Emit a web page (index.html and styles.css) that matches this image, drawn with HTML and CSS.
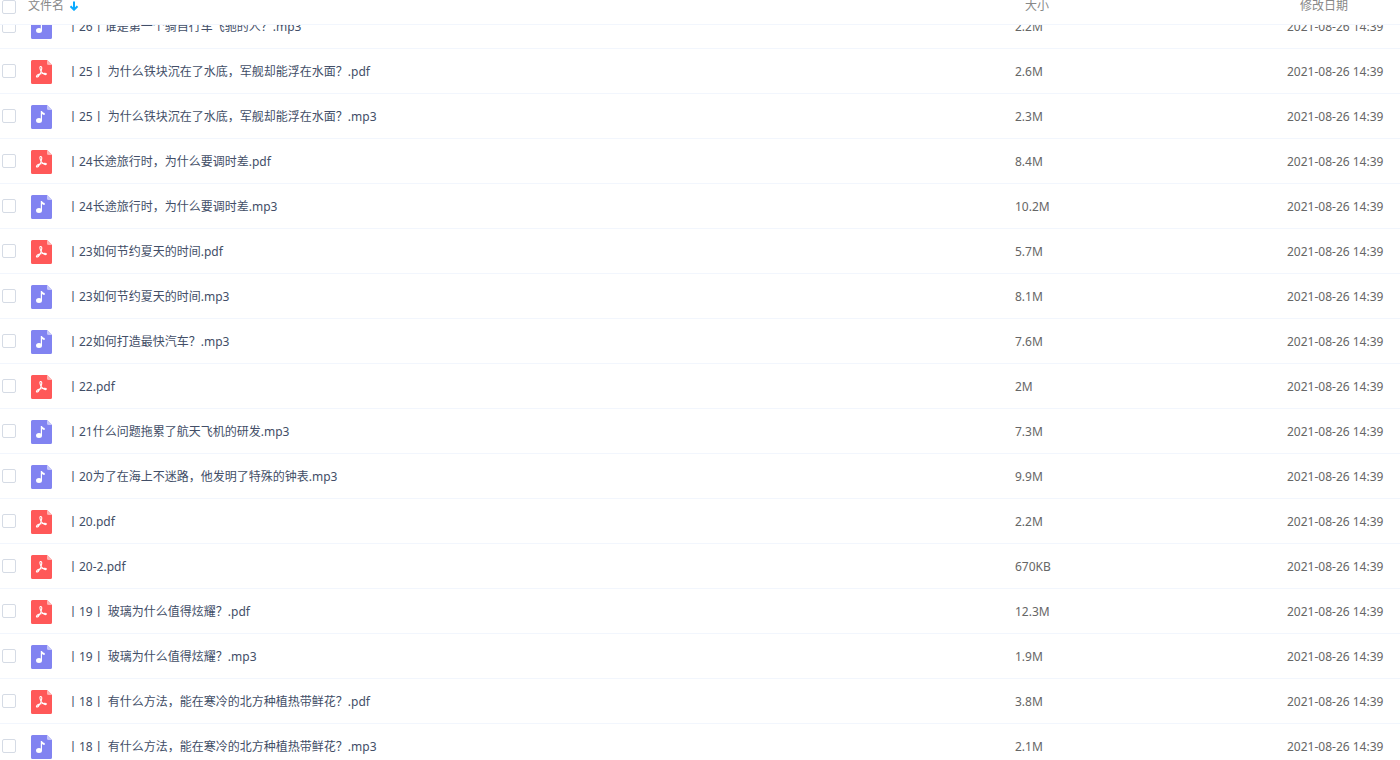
FILE: index.html
```
<!DOCTYPE html>
<html lang="zh-CN">
<head>
<meta charset="utf-8">
<title>文件列表</title>
<link rel="stylesheet" href="styles.css">
</head>
<body>
<svg class="sprite" aria-hidden="true">
  <symbol id="pdf" viewBox="0 0 21 24">
    <path fill="#ff5858" d="M1.500 0H16l5 5v17.500a1.500 1.500 0 0 1-1.500 1.500h-18A1.500 1.500 0 0 1 0 22.500v-21A1.500 1.500 0 0 1 1.500 0z"/>
    <path fill="#ffb3b3" d="M16 0l5 5h-3.500A1.500 1.500 0 0 1 16 3.500z"/>
    <path fill="none" stroke="#fff" stroke-width="1.100" stroke-linecap="round" stroke-linejoin="round" d="M9.300 6.500c1.400-.4 1.600 1.200 1.400 2.500-.3 2.600-1.600 5.600-3.500 7.500-.9.900-2 .6-1.700-.4.500-1.500 4.700-2.800 8-2.900 2.400-.1 2.300 1.500.8 1.400-1.500-.1-3.200-1.600-4.100-3.100-.9-1.600-1.900-4.600-.9-5z"/>
  </symbol>
  <symbol id="mp3" viewBox="0 0 21 24">
    <path fill="#8183f1" d="M1.500 0H16l5 5v17.500a1.500 1.500 0 0 1-1.500 1.500h-18A1.500 1.500 0 0 1 0 22.500v-21A1.500 1.500 0 0 1 1.500 0z"/>
    <path fill="#c6c7fa" d="M16 0l5 5h-3.500A1.500 1.500 0 0 1 16 3.500z"/>
    <ellipse cx="8" cy="15.500" rx="3" ry="2.500" fill="#fff"/>
    <path fill="#fff" d="M9.800 6h1.200c.3 1.200 1.300 1.800 2.700 1.900v2c-1.100 0-2-.3-2.700-.9v6.500H9.800z"/>
  </symbol>
</svg>
<table class="files">
  <thead class="head">
    <tr class="row head-row">
      <th class="name"><input class="check" type="checkbox" aria-label="全选"><button class="sort" type="button">文件名<svg class="arrow" viewBox="0 0 10 10" aria-hidden="true"><path d="M5 .5v8M1.500 5.200L5 8.700l3.500-3.500" fill="none" stroke="#09aaff" stroke-width="2"/></svg></button></th>
      <th class="size">大小</th>
      <th class="date">修改日期</th>
    </tr>
  </thead>
  <tbody class="body">
    <tr class="row"><td class="name"><input class="check" type="checkbox" id="f1"><svg class="icon" aria-hidden="true"><use href="#mp3"/></svg><label for="f1">丨26丨谁是第一个骑自行车飞驰的人？.mp3</label></td><td class="size">2.2M</td><td class="date">2021-08-26 14:39</td></tr>
    <tr class="row"><td class="name"><input class="check" type="checkbox" id="f2"><svg class="icon" aria-hidden="true"><use href="#pdf"/></svg><label for="f2">丨25丨 为什么铁块沉在了水底，军舰却能浮在水面？.pdf</label></td><td class="size">2.6M</td><td class="date">2021-08-26 14:39</td></tr>
    <tr class="row"><td class="name"><input class="check" type="checkbox" id="f3"><svg class="icon" aria-hidden="true"><use href="#mp3"/></svg><label for="f3">丨25丨 为什么铁块沉在了水底，军舰却能浮在水面？.mp3</label></td><td class="size">2.3M</td><td class="date">2021-08-26 14:39</td></tr>
    <tr class="row"><td class="name"><input class="check" type="checkbox" id="f4"><svg class="icon" aria-hidden="true"><use href="#pdf"/></svg><label for="f4">丨24长途旅行时，为什么要调时差.pdf</label></td><td class="size">8.4M</td><td class="date">2021-08-26 14:39</td></tr>
    <tr class="row"><td class="name"><input class="check" type="checkbox" id="f5"><svg class="icon" aria-hidden="true"><use href="#mp3"/></svg><label for="f5">丨24长途旅行时，为什么要调时差.mp3</label></td><td class="size">10.2M</td><td class="date">2021-08-26 14:39</td></tr>
    <tr class="row"><td class="name"><input class="check" type="checkbox" id="f6"><svg class="icon" aria-hidden="true"><use href="#pdf"/></svg><label for="f6">丨23如何节约夏天的时间.pdf</label></td><td class="size">5.7M</td><td class="date">2021-08-26 14:39</td></tr>
    <tr class="row"><td class="name"><input class="check" type="checkbox" id="f7"><svg class="icon" aria-hidden="true"><use href="#mp3"/></svg><label for="f7">丨23如何节约夏天的时间.mp3</label></td><td class="size">8.1M</td><td class="date">2021-08-26 14:39</td></tr>
    <tr class="row"><td class="name"><input class="check" type="checkbox" id="f8"><svg class="icon" aria-hidden="true"><use href="#mp3"/></svg><label for="f8">丨22如何打造最快汽车？.mp3</label></td><td class="size">7.6M</td><td class="date">2021-08-26 14:39</td></tr>
    <tr class="row"><td class="name"><input class="check" type="checkbox" id="f9"><svg class="icon" aria-hidden="true"><use href="#pdf"/></svg><label for="f9">丨22.pdf</label></td><td class="size">2M</td><td class="date">2021-08-26 14:39</td></tr>
    <tr class="row"><td class="name"><input class="check" type="checkbox" id="f10"><svg class="icon" aria-hidden="true"><use href="#mp3"/></svg><label for="f10">丨21什么问题拖累了航天飞机的研发.mp3</label></td><td class="size">7.3M</td><td class="date">2021-08-26 14:39</td></tr>
    <tr class="row"><td class="name"><input class="check" type="checkbox" id="f11"><svg class="icon" aria-hidden="true"><use href="#mp3"/></svg><label for="f11">丨20为了在海上不迷路，他发明了特殊的钟表.mp3</label></td><td class="size">9.9M</td><td class="date">2021-08-26 14:39</td></tr>
    <tr class="row"><td class="name"><input class="check" type="checkbox" id="f12"><svg class="icon" aria-hidden="true"><use href="#pdf"/></svg><label for="f12">丨20.pdf</label></td><td class="size">2.2M</td><td class="date">2021-08-26 14:39</td></tr>
    <tr class="row"><td class="name"><input class="check" type="checkbox" id="f13"><svg class="icon" aria-hidden="true"><use href="#pdf"/></svg><label for="f13">丨20-2.pdf</label></td><td class="size">670KB</td><td class="date">2021-08-26 14:39</td></tr>
    <tr class="row"><td class="name"><input class="check" type="checkbox" id="f14"><svg class="icon" aria-hidden="true"><use href="#pdf"/></svg><label for="f14">丨19丨 玻璃为什么值得炫耀？.pdf</label></td><td class="size">12.3M</td><td class="date">2021-08-26 14:39</td></tr>
    <tr class="row"><td class="name"><input class="check" type="checkbox" id="f15"><svg class="icon" aria-hidden="true"><use href="#mp3"/></svg><label for="f15">丨19丨 玻璃为什么值得炫耀？.mp3</label></td><td class="size">1.9M</td><td class="date">2021-08-26 14:39</td></tr>
    <tr class="row"><td class="name"><input class="check" type="checkbox" id="f16"><svg class="icon" aria-hidden="true"><use href="#pdf"/></svg><label for="f16">丨18丨 有什么方法，能在寒冷的北方种植热带鲜花？.pdf</label></td><td class="size">3.8M</td><td class="date">2021-08-26 14:39</td></tr>
    <tr class="row"><td class="name"><input class="check" type="checkbox" id="f17"><svg class="icon" aria-hidden="true"><use href="#mp3"/></svg><label for="f17">丨18丨 有什么方法，能在寒冷的北方种植热带鲜花？.mp3</label></td><td class="size">2.1M</td><td class="date">2021-08-26 14:39</td></tr>
  </tbody>
</table>
</body>
</html>
```

FILE: styles.css
```
* {
  box-sizing: border-box;
}

body {
  margin: 0;
  background: #fff;
  color: #666;
  font: 12px/16px "Noto Sans", "Noto Sans CJK SC", sans-serif;
}

.sprite {
  display: none;
}

.files {
  display: flex;
  flex-direction: column;
  height: 100vh;
  overflow: hidden;
}

.head,
.body {
  display: block;
}

.head {
  flex: none;
}

.body {
  flex: 1;
  min-height: 0;
  overflow: hidden;
}

.row {
  display: grid;
  grid-template-columns: 1015fr 272fr 113fr;
  align-items: center;
  height: 45px;
  border-bottom: 1px solid #f2f6fd;
}

/* The list is scrolled part of the way into its first row. */
.body .row:first-child {
  margin-top: -21px;
}

th,
td {
  padding: 0;
  text-align: left;
  font-weight: 400;
  white-space: nowrap;
}

.name {
  display: flex;
  align-items: center;
  padding-left: 2px;
  color: #424e67;
}

.body label,
.body .size,
.body .date {
  padding-top: 2px;
}

.check {
  appearance: none;
  flex: none;
  width: 14px;
  height: 14px;
  margin: 0;
  border: 1px solid #d5dbe5;
  border-radius: 2px;
  background: #fff;
}

.check:checked {
  background: #09aaff;
}

.icon {
  flex: none;
  width: 21px;
  height: 24px;
  margin: 1px 15px 0;
}

.head-row {
  align-items: start;
  height: 25px;
  color: #888;
  line-height: 12px;
}

.head-row .name {
  align-items: flex-start;
}

.head-row .size {
  padding-left: 10px;
}

.head-row .date {
  padding-left: 13px;
}

.sort {
  display: flex;
  align-items: center;
  gap: 5px;
  margin: 0 0 0 12px;
  padding: 0;
  border: 0;
  background: none;
  color: #888;
  font: inherit;
}

.arrow {
  width: 10px;
  height: 10px;
}
```
